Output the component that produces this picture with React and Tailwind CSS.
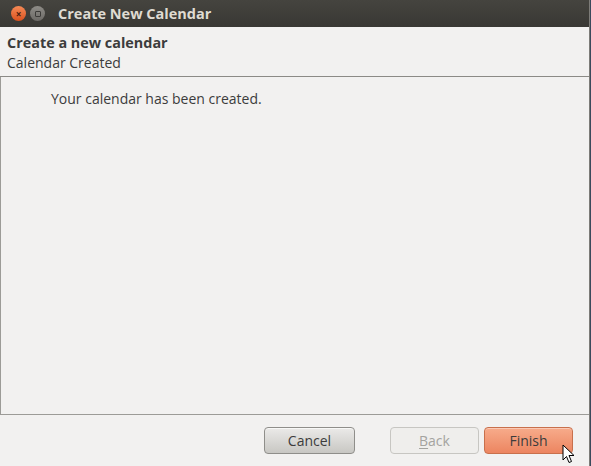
export default function App() {
  return (
    <div className="w-[591px] h-[466px] bg-[#3a4a5c] overflow-hidden relative" style={{ fontFamily: '"Open Sans", "DejaVu Sans", sans-serif' }}>
      <div className="w-[590px] h-[466px] flex flex-col bg-[#f2f1f0] border-r border-[#7d7c78]">
        <div className="h-[27px] shrink-0 flex items-center bg-gradient-to-b from-[#45443f] to-[#393834] pl-[11px]">
          <div className="w-[15px] h-[15px] rounded-full bg-gradient-to-b from-[#f58a55] to-[#d9501c] flex items-center justify-center text-[#4a2010] text-[10px] leading-none font-bold">×</div>
          <div className="w-[15px] h-[15px] rounded-full bg-gradient-to-b from-[#8e8c87] to-[#6c6a66] ml-[4px] flex items-center justify-center">
            <div className="w-[6px] h-[6px] border border-[#3c3b38] rounded-[1px]" />
          </div>
          <span className="ml-[13px] text-[14.5px] font-bold text-[#dfdbd2]">Create New Calendar</span>
        </div>
        <div className="h-[50px] shrink-0 px-[7px] pt-[6px] border-b border-[#8b8a86] text-[#3c3c3c] text-[14px] leading-[20px]">
          <div className="font-bold text-[14.4px]">Create a new calendar</div>
          <div>Calendar Created</div>
        </div>
        <div className="h-[338px] shrink-0 border-l border-b border-[#9c9b97] pl-[50px] pt-[11px] text-[14px] text-[#3c3c3c]">
          Your calendar has been created.
        </div>
        <div className="flex-1 flex items-start pt-[12px] pl-[264px] text-[14px]">
          <button className="w-[91px] h-[27px] rounded-[4px] border border-[#8f8e8a] bg-gradient-to-b from-[#ebeae8] to-[#c8c7c3] text-[#3c3c3c] shadow-[inset_0_1px_0_#f8f8f7]">Cancel</button>
          <button className="ml-[35px] w-[89px] h-[27px] rounded-[4px] border border-[#c7c6c2] bg-[#efeeec] text-[#a4a39f]"><span className="underline underline-offset-2">B</span>ack</button>
          <button className="ml-[5px] w-[89px] h-[27px] rounded-[4px] border border-[#c8704c] bg-gradient-to-b from-[#f7ab8b] to-[#ec8560] text-[#3c3c3c] shadow-[inset_0_1px_0_#fbc9b4]">Finish</button>
        </div>
      </div>
      <svg className="absolute left-[562px] top-[444px]" width="13" height="21" viewBox="0 0 13 21">
        <path d="M1 1 L1 16 L4.5 12.5 L7 18.5 L9.5 17.5 L7 11.5 L12 11.5 Z" fill="#fff" stroke="#000" strokeWidth="1" strokeLinejoin="round" />
      </svg>
    </div>
  );
}
